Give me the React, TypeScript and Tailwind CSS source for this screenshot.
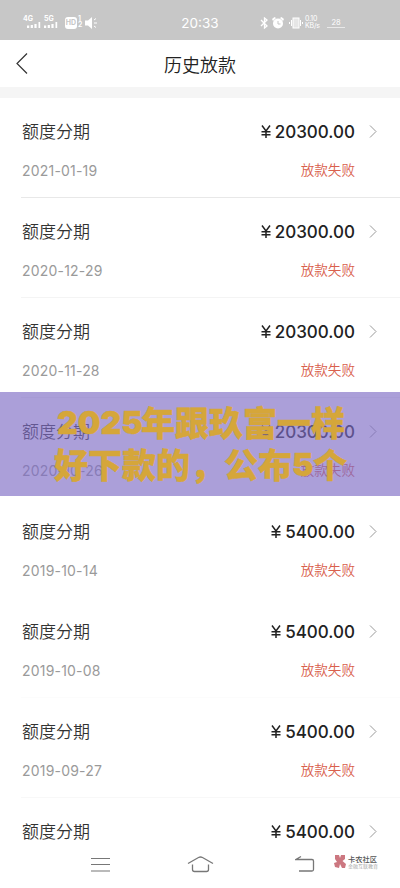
interface LoanRecord {
  date: string;
  amount: string;
  divider: string;
}

const RECORDS: LoanRecord[] = [
  { date: "2021-01-19", amount: "20300.00", divider: "border-[#e8e8e8]" },
  { date: "2020-12-29", amount: "20300.00", divider: "border-[#f4f4f4]" },
  { date: "2020-11-28", amount: "20300.00", divider: "border-[#f4f4f4]" },
  { date: "2020-10-26", amount: "20300.00", divider: "border-transparent" },
  { date: "2019-10-14", amount: "5400.00", divider: "border-transparent" },
  { date: "2019-10-08", amount: "5400.00", divider: "border-[#fcfcfc]" },
  { date: "2019-09-27", amount: "5400.00", divider: "border-[#f8f8f8]" },
  { date: "", amount: "5400.00", divider: "border-transparent" },
];

function Network({ label, barsClass }: { label: string; barsClass: string }) {
  return (
    <div className="flex w-[21px] flex-col text-[7px] font-bold leading-[6px]">
      <span>{label}</span>
      <span className={barsClass}>
        <svg className="h-[6px] w-[14px]" viewBox="0 0 14 6" fill="white">
          <path d="M0 3.500h2.200v2.500H0zM3.700 3h2.200v3H3.700zM7.400 2h2.200v4H7.400zM11.500 0h1.700v6h-1.700z" />
        </svg>
      </span>
    </div>
  );
}

function StatusBar() {
  return (
    <div className="relative flex h-10 shrink-0 items-start bg-[#c7c7c7] pl-[23px] pt-[16px] font-['Inter'] text-white">
      <Network label="4G" barsClass="pl-[4px]" />
      <Network label="5G" barsClass="" />
      <span className="mt-px h-[12px] w-[12px] rounded-[3px] bg-white text-center text-[7px] font-bold leading-[12px] text-[#c7c7c7]">
        HD
      </span>
      <span className="w-[8px] pl-px text-[7px] font-semibold leading-[6px]">
        1<br />2
      </span>
      <svg className="mt-px h-[12px] w-[13px]" viewBox="0 0 13 12" fill="white">
        <path d="M0 3.500h3L7 0v12L3 8.500H0z" />
        <path
          d="M9 3l2-1.500M9 6h3M9 9l2 1.500"
          stroke="white"
          strokeWidth="1"
        />
      </svg>
      <div className="absolute left-0 top-[14px] w-full text-center text-[13.500px] leading-[18px]">
        20:33
      </div>
      <div className="absolute left-[260px] top-[17px] flex">
        <svg
          className="h-[12px] w-[9px]"
          viewBox="0 0 9 12"
          fill="none"
          stroke="white"
          strokeWidth="1.300"
        >
          <path d="M1 3l6 6-2.500 2V1L7 3 1 9" />
        </svg>
        <svg
          className="ml-[3px] h-[12px] w-[12px]"
          viewBox="0 0 12 12"
          fill="white"
        >
          <circle cx="6" cy="6.500" r="5" />
          <path d="M0 2l2.500-2L4 1 1 4zM12 2L9.500 0 8 1l3 3z" />
          <path d="M6 4v3h2.500" fill="none" stroke="#c7c7c7" />
        </svg>
        <svg
          className="ml-[5px] h-[12px] w-[14px]"
          viewBox="0 0 14 12"
          fill="none"
          stroke="white"
        >
          <rect x="4" y="1" width="6" height="10" fill="#e6e6e6" />
          <path d="M2.500 3v6M11.500 3v6M.5 5v2M13.500 5v2" />
        </svg>
        <div className="ml-[2px] -mt-px w-[22px] text-[7px] leading-[6.500px] tracking-[-0.200px]">
          0.10
          <br />
          KB/s
        </div>
        <div className="h-[11px] w-[18px] border-b border-white/60 text-center text-[7.500px] leading-[11px]">
          28
        </div>
      </div>
    </div>
  );
}

function Header() {
  return (
    <div className="relative flex h-[47px] shrink-0 items-center justify-center">
      <svg
        className="absolute left-[16px] top-[12px] h-[23px] w-[12px]"
        viewBox="0 0 12 23"
        fill="none"
        stroke="#333"
        strokeWidth="1.200"
      >
        <path d="M11 1.500L1 11.500l10 10" />
      </svg>
      <h1 className="text-[18px] font-[350] leading-[26px] text-[#222]">
        历史放款
      </h1>
    </div>
  );
}

function RecordRow({ record }: { record: LoanRecord }) {
  return (
    <div
      className={`ml-[21px] flex h-[100px] shrink-0 flex-col border-b pl-px pt-[21px] ${record.divider}`}
    >
      <div className="flex h-6 items-center">
        <span className="text-[17px] font-[350] leading-6 text-[#333]">
          额度分期
        </span>
        <div className="ml-auto flex items-center text-[#222]">
          <svg
            className="mr-[4px] h-[13px] w-[10px]"
            viewBox="0 0 10 13"
            fill="none"
            stroke="currentColor"
            strokeWidth="1.500"
          >
            <path d="M1 .5l4 5.500 4-5.500M5 6v7M.5 6.700h9M.5 9.700h9" />
          </svg>
          <span className="pt-[2px] font-['Inter'] text-[17px] font-medium leading-6">
            {record.amount}
          </span>
        </div>
        <svg
          className="ml-[14px] mr-[23px] h-[13px] w-[8px]"
          viewBox="0 0 8 13"
          fill="none"
          stroke="#999"
        >
          <path d="M1 .5l6 6-6 6" />
        </svg>
      </div>
      {record.date && (
        <div className="mt-[17px] flex h-[18px] items-center justify-between pr-[45px]">
          <span className="pt-[3px] font-['Inter'] text-[14px] leading-[18px] tracking-[0.200px] text-[#9a9a9a]">
            {record.date}
          </span>
          <span className="text-[13.600px] font-[350] leading-[18px] text-[#d9604c]">
            放款失败
          </span>
        </div>
      )}
    </div>
  );
}

function Banner() {
  return (
    <div className="absolute left-0 top-[392px] h-[104px] w-full whitespace-nowrap bg-[rgba(126,107,197,0.65)] pt-[9px] font-['Noto_Sans_CJK_SC'] text-[34px] font-black leading-[42px] text-[#d5a63a]">
      <div className="flex h-[42px] pl-[57px] [-webkit-text-stroke:0.500px_#d5a63a]">
        <span className="w-[84px] pt-px font-['Inter'] text-[32px]">2025</span>
        <span>年跟玖富一样</span>
      </div>
      <div className="flex h-[42px] pl-[54px] [-webkit-text-stroke:0.500px_#d5a63a]">
        <span>好下款的，公布</span>
        <span className="w-[21px] pt-px font-['Inter'] text-[32px]">5</span>
        <span>个</span>
      </div>
    </div>
  );
}

function NavBar() {
  return (
    <div className="absolute bottom-0 left-0 flex h-[42px] w-full pl-[90px] pt-[9px]">
      <svg className="h-[18px] w-[20px]" stroke="#777" strokeWidth="1.200">
        <path d="M1 3.500h19M1 9.500h19M1 16h19" />
      </svg>
      <svg
        className="ml-[77px] h-[18px] w-[27px]"
        fill="none"
        stroke="#777"
        strokeWidth="1.300"
      >
        <path d="M1 8.500L11.500 2.500q2-1 4 0L26 8.500M5.500 9.500v5q0 2 2 2h12q2 0 2-2v-5" />
      </svg>
      <svg
        className="ml-[81px] h-[18px] w-[20px]"
        fill="none"
        stroke="#777"
        strokeWidth="1.300"
      >
        <path d="M6 1.500L1 4.500h16q1.500 0 1.500 1.500v8.500q0 1.500-1.500 1.500H4" />
      </svg>
      <div className="ml-[19px] flex">
        <svg className="h-[13px] w-[12px]" viewBox="0 0 12 13" fill="#cc7780">
          <path d="M1 0h4l1 3 1-3h4v4L8.500 6l3.500 3-1 4H8L6 9l-1 4-4-1-1-4 3-1-2-3z" />
        </svg>
        <div className="ml-[2px] whitespace-nowrap">
          <div className="text-[7.250px] font-medium leading-[8px] text-[#555]">
            卡农社区
          </div>
          <div className="text-[5px] leading-[5px] text-[#aaa]">
            金融互联教育
          </div>
        </div>
      </div>
    </div>
  );
}

export default function App() {
  return (
    <div className="relative flex h-[888px] w-[400px] flex-col overflow-hidden bg-white font-['Noto_Sans_CJK_SC',sans-serif]">
      <StatusBar />
      <Header />
      <div className="h-[11px] shrink-0 bg-[#f5f5f5]" />
      {RECORDS.map((record, i) => (
        <RecordRow key={i} record={record} />
      ))}
      <Banner />
      <NavBar />
    </div>
  );
}
